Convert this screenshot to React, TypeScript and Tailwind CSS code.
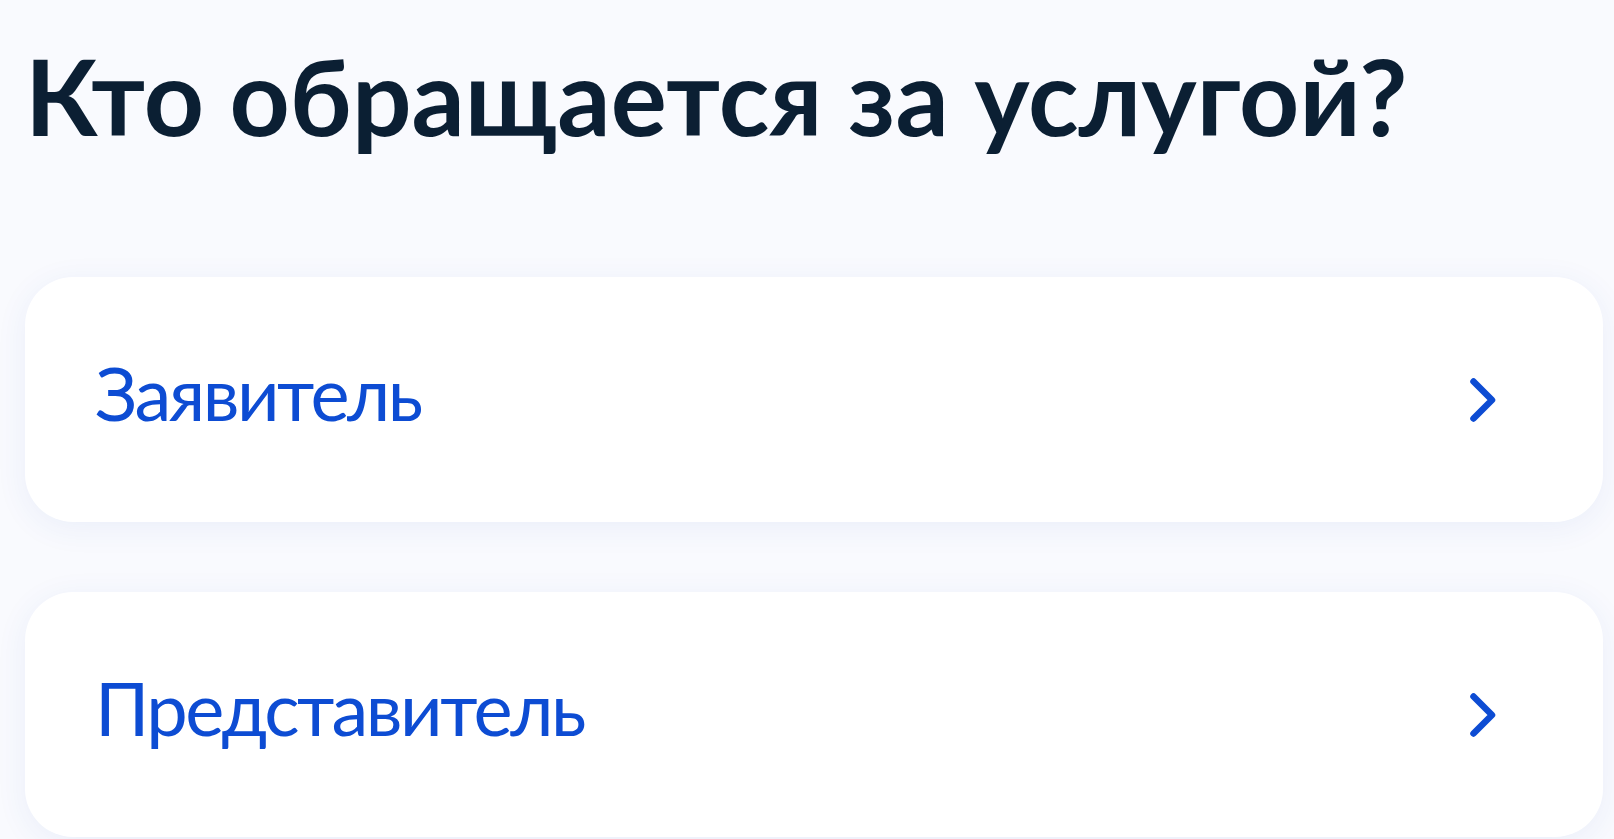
import React from "react";

function Chevron() {
  return (
    <svg width="26" height="44" viewBox="0 0 26 44" fill="none" className="shrink-0">
      <polyline
        points="3.5,3.5 22,22 3.5,40.5"
        stroke="#0d4cd3"
        strokeWidth="6.5"
        strokeLinecap="round"
        strokeLinejoin="round"
      />
    </svg>
  );
}

function Option({ label }: { label: string }) {
  return (
    <button
      type="button"
      className="flex h-[245px] w-full items-center justify-between rounded-[48px] bg-white pl-[70px] pr-[107px] text-left shadow-[0_6px_32px_rgba(38,79,185,0.07)]"
    >
      <span className="mb-[13px] text-[74px] leading-none tracking-[-2.5px] text-[#0d4cd3] [font-family:Lato,'Noto_Sans',sans-serif]">
        {label}
      </span>
      <Chevron />
    </button>
  );
}

export default function App() {
  return (
    <div className="min-h-screen overflow-hidden bg-[#f9fafe] pl-[25px] pr-[11px] pt-[43px] [font-family:Lato,'Noto_Sans',sans-serif]">
      <h1 className="text-[105px] font-bold leading-none text-[#0b1f33]">
        Кто обращается за услугой?
      </h1>
      <div className="mt-[129px] flex flex-col gap-[70px]">
        <Option label="Заявитель" />
        <Option label="Представитель" />
      </div>
    </div>
  );
}
